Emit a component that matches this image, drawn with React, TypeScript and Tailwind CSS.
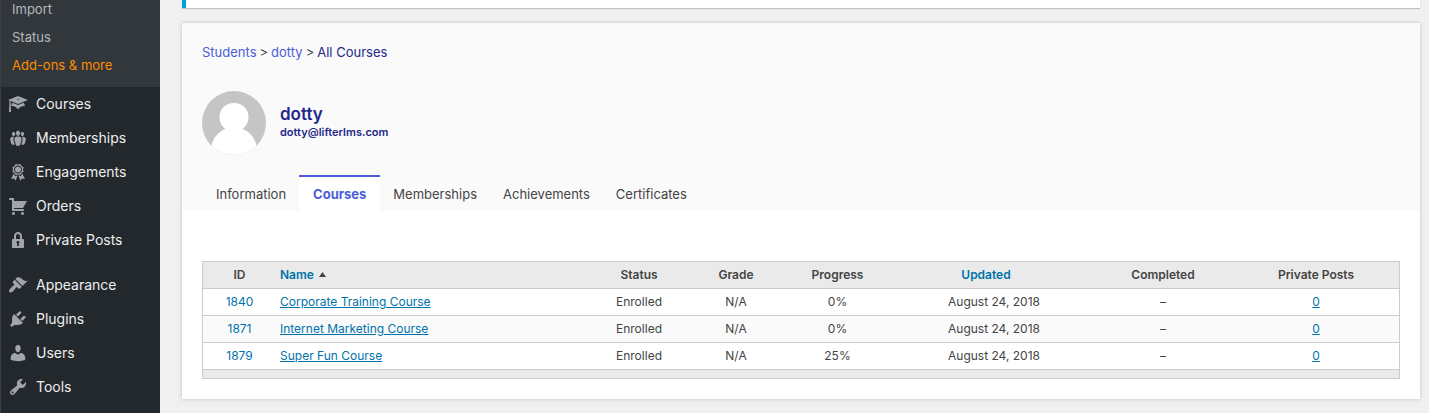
import React from "react"

type menuItemProps = {
    name: string
    paths: string[]
}

type courseProps = {
    id: number
    name: string
    progress: string
}

const submenu = ["Import", "Status"]

const contentMenu: menuItemProps[] = [
    {
        name: "Courses",
        paths: [
            "M10 10L2.54 7.02 3 18H1l.48-11.41L0 6l10-4 10 4zm0-5c-.55 0-1 .22-1 .5s.45.5 1 .5 1-.22 1-.5-.45-.5-1-.5zm0 6l5.57-2.23c.71.94 1.2 2.07 1.36 3.3-.3-.04-.61-.07-.93-.07-2.55 0-4.78 1.37-6 3.41C8.78 13.37 6.55 12 4 12c-.32 0-.63.03-.93.07.16-1.23.65-2.36 1.36-3.3z",
        ],
    },
    {
        name: "Memberships",
        paths: [
            "M8.03 4.46c-.29 1.28.55 3.46 1.97 3.46 1.41 0 2.25-2.18 1.96-3.46-.22-.98-1.08-1.63-1.96-1.63-.89 0-1.74.65-1.97 1.63zm-4.13.9c-.25 1.08.47 2.93 1.67 2.93s1.92-1.85 1.67-2.93c-.19-.83-.92-1.39-1.67-1.39s-1.48.56-1.67 1.39zm8.86 0c-.25 1.08.47 2.93 1.66 2.93 1.2 0 1.92-1.85 1.67-2.93-.19-.83-.92-1.39-1.67-1.39-.74 0-1.47.56-1.66 1.39zm-.59 11.43l1.25-4.3C14.2 10 12.71 8.47 10 8.47c-2.72 0-4.21 1.53-3.44 4.02l1.26 4.3C8.05 17.51 9 18 10 18c.98 0 1.94-.49 2.17-1.21z",
            "M6.1 8.95c-2.6-.5-4.5.85-3.85 3.25l1.05 3.6c.2.65 1 1.05 1.85 1.05.6 0 1.1-.15 1.5-.45L5.6 12.8c-.45-1.55-.3-2.85.5-3.85z",
            "M13.9 8.95c2.6-.5 4.5.85 3.85 3.25l-1.05 3.6c-.2.65-1 1.05-1.85 1.05-.6 0-1.1-.15-1.5-.45l1.05-3.6c.45-1.55.3-2.85-.5-3.85z",
        ],
    },
    {
        name: "Engagements",
        paths: [
            "M4.46 5.16L5 7.46l-.54 2.29 2.01 1.24L7.7 13l2.3-.54 2.3.54 1.23-2.01 2.01-1.24L15 7.46l.54-2.3-2-1.24-1.24-2.01-2.3.55-2.29-.54-1.25 2zm5.55 6.34c-2.24 0-4.05-1.81-4.05-4.04 0-2.24 1.81-4.05 4.05-4.05 2.23 0 4.04 1.81 4.04 4.05 0 2.23-1.81 4.04-4.04 4.04z",
            "M9.99 10.5c1.68 0 3.04-1.36 3.04-3.04 0-1.68-1.36-3.05-3.04-3.05-1.68 0-3.05 1.37-3.05 3.05 0 1.68 1.37 3.04 3.05 3.04z",
            "M5.7 11.6l1.4 2.4 2.5-.4-2 5.200-1.500-2.300-3 .6z",
            "M14.3 11.6l-1.4 2.4-2.500-.4 2 5.200 1.500-2.300 3 .6z",
        ],
    },
    {
        name: "Orders",
        paths: [
            "M6 13h9c.55 0 1 .45 1 1s-.45 1-1 1H5c-.55 0-1-.45-1-1V4H2c-.55 0-1-.45-1-1s.45-1 1-1h3c.55 0 1 .45 1 1v2h13l-4 7H6v1zm-.5 3c.83 0 1.5.67 1.5 1.5S6.33 19 5.5 19 4 18.33 4 17.5 4.67 16 5.5 16zm9 0c.83 0 1.5.67 1.5 1.5s-.67 1.5-1.5 1.5-1.5-.67-1.5-1.5.67-1.5 1.5-1.5z",
        ],
    },
    {
        name: "Private Posts",
        paths: [
            "M14 9h1c.55 0 1 .45 1 1v7c0 .55-.45 1-1 1H5c-.55 0-1-.45-1-1v-7c0-.55.45-1 1-1h1V6c0-2.21 1.79-4 4-4s4 1.79 4 4v3zm-2 0V6c0-1.1-.9-2-2-2s-2 .9-2 2v3h4zm-1 7l-.36-2.15c.51-.24.86-.75.86-1.35 0-.83-.67-1.5-1.5-1.5s-1.5.67-1.5 1.5c0 .6.35 1.11.86 1.35L9 16h2z",
        ],
    },
]

const systemMenu: menuItemProps[] = [
    {
        name: "Appearance",
        paths: [
            "M14.48 11.06L7.41 3.99l1.5-1.5c.5-.56 2.3-.47 3.51.32 1.21.8 1.43 1.28 2.91 2.1 1.18.64 2.45 1.26 4.45.85zm-.71.71L6.7 4.7 4.93 6.47c-.39.39-.39 1.02 0 1.41l1.06 1.06c.39.39.39 1.03 0 1.42-.6.6-1.43 1.11-2.21 1.69-.35.26-.7.53-1.01.84C1.43 14.23.4 16.08 1.4 17.07c.99 1 2.84-.03 4.18-1.36.31-.31.58-.66.85-1.02.57-.78 1.08-1.61 1.69-2.21.39-.39 1.02-.39 1.41 0l1.06 1.06c.39.39 1.02.39 1.41 0z",
        ],
    },
    {
        name: "Plugins",
        paths: [
            "M13.11 4.36L9.87 7.6 8 5.73l3.24-3.24c.35-.34 1.05-.2 1.56.32.52.51.66 1.21.31 1.55zm-8 1.77l.91-1.12 9.01 9.01-1.19.84c-.71.71-2.63 1.16-3.82 1.16H6.14L4.9 17.26c-.59.59-1.54.59-2.12 0-.59-.58-.59-1.53 0-2.12l1.24-1.24v-3.88c0-1.13.4-3.19 1.09-3.89zm7.26 3.97l3.24-3.24c.34-.35 1.04-.21 1.55.31.52.51.66 1.21.31 1.55l-3.24 3.25z",
        ],
    },
    {
        name: "Users",
        paths: [
            "M10 9.25c-2.27 0-2.73-3.44-2.73-3.44C7 4.02 7.82 2 9.97 2c2.16 0 2.98 2.02 2.71 3.81 0 0-.41 3.44-2.68 3.44zm0 2.57L12.72 10c2.39 0 4.52 2.33 4.52 4.53v2.49s-3.65 1.13-7.24 1.13c-3.65 0-7.24-1.13-7.24-1.13v-2.49c0-2.25 1.94-4.48 4.47-4.48z",
        ],
    },
    {
        name: "Tools",
        paths: [
            "M16.68 9.77c-1.34 1.34-3.3 1.67-4.95.99l-5.41 6.52c-.99.99-2.59.99-3.58 0s-.99-2.59 0-3.57l6.52-5.42c-.68-1.65-.35-3.61.99-4.95 1.28-1.28 3.12-1.62 4.72-1.06l-2.89 2.89 2.82 2.82 2.86-2.87c.53 1.58.18 3.39-1.08 4.65zM3.81 16.21c.4.39 1.04.39 1.43 0 .4-.4.4-1.04 0-1.43-.39-.4-1.03-.4-1.43 0-.39.39-.39 1.03 0 1.43z",
        ],
    },
]

const tabs = ["Information", "Courses", "Memberships", "Achievements", "Certificates"]

const courses: courseProps[] = [
    { id: 1840, name: "Corporate Training Course", progress: "0%" },
    { id: 1871, name: "Internet Marketing Course", progress: "0%" },
    { id: 1879, name: "Super Fun Course", progress: "25%" },
]

const MenuItemComponent: React.FC<menuItemProps> = ({ name, paths }) => {
    return (
        <li>
            <a href="#" className="flex h-[34px] items-center gap-2 pl-[7px] text-sm text-[#eeeeee] hover:text-[#00b9eb]">
                <svg viewBox="0 0 20 20" className="size-5 shrink-0 fill-[#a0a5aa]" aria-hidden="true">
                    {paths.map(path => <path key={path} d={path} fillRule="evenodd" />)}
                </svg>
                {name}
            </a>
        </li>
    )
}

const SidebarComponent = () => {
    return (
        <nav className="w-40 shrink-0 border-l border-[#3a3f44] bg-[#23282d]">
            <ul className="bg-[#32373c] pb-[7px] text-[13px]">
                {submenu.map(item => (
                    <li key={item} className="first:-mt-1">
                        <a href="#" className="flex h-7 items-center pl-[11px] text-[#b4b9be]">{item}</a>
                    </li>
                ))}
                <li>
                    <a href="#" className="flex h-7 items-center pl-[11px] text-[#ff8c00]">Add-ons &amp; more</a>
                </li>
            </ul>
            <ul>
                {contentMenu.map(item => <MenuItemComponent key={item.name} {...item} />)}
            </ul>
            <ul className="mt-[11px]">
                {systemMenu.map(item => <MenuItemComponent key={item.name} {...item} />)}
            </ul>
        </nav>
    )
}

const AvatarComponent = () => {
    return (
        <svg viewBox="0 0 64 64" className="size-16 shrink-0" role="img" aria-label="dotty">
            <defs>
                <clipPath id="avatar">
                    <circle cx="32" cy="32" r="32" />
                </clipPath>
            </defs>
            <g clipPath="url(#avatar)">
                <rect width="64" height="64" fill="#c5c5c5" />
                <path d="M32 12c8.500 0 14.500 6 14.500 14 0 5-2.500 9.500-6 12 7 2.500 12 8 14.500 18v8H9v-8c2.500-10 7.500-15.500 14.500-18-3.500-2.500-6-7-6-12 0-8 6-14 14.500-14z" fill="#fff" />
            </g>
        </svg>
    )
}

const ProfileHeaderComponent = () => {
    return (
        <header className="bg-[#fafafa] px-5 pt-5">
            <div className="flex h-5 items-center gap-[3px] text-[13px] text-[#444444]">
                <a href="#" className="text-[#4b5dd9]">Students</a>
                <span>&gt;</span>
                <a href="#" className="text-[#4b5dd9]">dotty</a>
                <span>&gt;</span>
                <a href="#" className="text-[#23288c]">All Courses</a>
            </div>
            <div className="mt-7 flex h-16 items-center gap-[14px] text-[#23288c]">
                <AvatarComponent />
                <div className="pb-0.5">
                    <h2 className="text-[17px] leading-5 font-semibold">dotty</h2>
                    <h5 className="text-[11px] leading-4 font-semibold">dotty@lifterlms.com</h5>
                </div>
            </div>
            <nav className="mt-5 flex pl-px text-[13px] text-[#444444]">
                {tabs.map(tab => (
                    <a
                        key={tab}
                        href="#"
                        className={tab === "Courses"
                            ? "flex h-9 items-center border-t-2 border-[#4b5dd9] bg-white px-[14px] pt-0.5 font-bold text-[#4b5dd9]"
                            : "flex h-9 items-center border-t-2 border-transparent px-[13px] pt-0.5"}
                    >
                        {tab}
                    </a>
                ))}
            </nav>
        </header>
    )
}

const CoursesTableComponent = () => {
    return (
        <div className="border border-[#cccccc]">
            <table className="w-full table-fixed text-center text-xs text-[#444444]">
                <colgroup>
                    <col className="w-[73px]" />
                    <col className="w-[310px]" />
                    <col className="w-[106px]" />
                    <col className="w-[88px]" />
                    <col className="w-[115px]" />
                    <col className="w-[198px]" />
                    <col className="w-[140px]" />
                    <col className="w-[166px]" />
                </colgroup>
                <thead>
                    <tr className="h-[26px] bg-[#eaeaea] *:font-semibold">
                        <th>ID</th>
                        <th className="px-1 text-left">
                            <a href="#" className="inline-flex items-center gap-[5px] text-[#0073aa]">
                                Name
                                <svg viewBox="0 0 7 5" className="h-[5px] w-[7px] fill-[#444444]" aria-hidden="true">
                                    <path d="M3.500 0L7 5H0z" />
                                </svg>
                            </a>
                        </th>
                        <th>Status</th>
                        <th>Grade</th>
                        <th>Progress</th>
                        <th className="pr-4">
                            <a href="#" className="text-[#0073aa]">Updated</a>
                        </th>
                        <th>Completed</th>
                        <th>Private Posts</th>
                    </tr>
                </thead>
                <tbody>
                    {courses.map(course => (
                        <tr key={course.id} className="h-[27px] border-t border-[#cccccc] even:bg-[#fafafa]">
                            <td><a href="#" className="text-[#0073aa]">{course.id}</a></td>
                            <td className="px-1 text-left">
                                <a href="#" className="text-[#0073aa] underline">{course.name}</a>
                            </td>
                            <td>Enrolled</td>
                            <td>N/A</td>
                            <td>{course.progress}</td>
                            <td>August 24, 2018</td>
                            <td>–</td>
                            <td><a href="#" className="text-[#0073aa] underline">0</a></td>
                        </tr>
                    ))}
                </tbody>
                <tfoot>
                    <tr className="h-[9px] border-t border-[#cccccc] bg-[#eaeaea]">
                        <td colSpan={8}></td>
                    </tr>
                </tfoot>
            </table>
        </div>
    )
}

const App = () => {
    return (
        <div className="flex min-h-screen overflow-hidden bg-[#f0f0f0] font-[Inter,sans-serif]">
            <SidebarComponent />
            <main className="min-w-0 flex-1 pr-[9px] pl-[22px]">
                <div className="h-2 border-l-4 border-[#00a0d2] bg-white shadow-[0_1px_1px_rgba(0,0,0,0.2)]"></div>
                <section className="mt-[15px] bg-white shadow-[0_0_4px_rgba(0,0,0,0.2)]">
                    <ProfileHeaderComponent />
                    <div className="px-5 pt-[50px] pb-5">
                        <CoursesTableComponent />
                    </div>
                </section>
            </main>
        </div>
    )
}

export default App
